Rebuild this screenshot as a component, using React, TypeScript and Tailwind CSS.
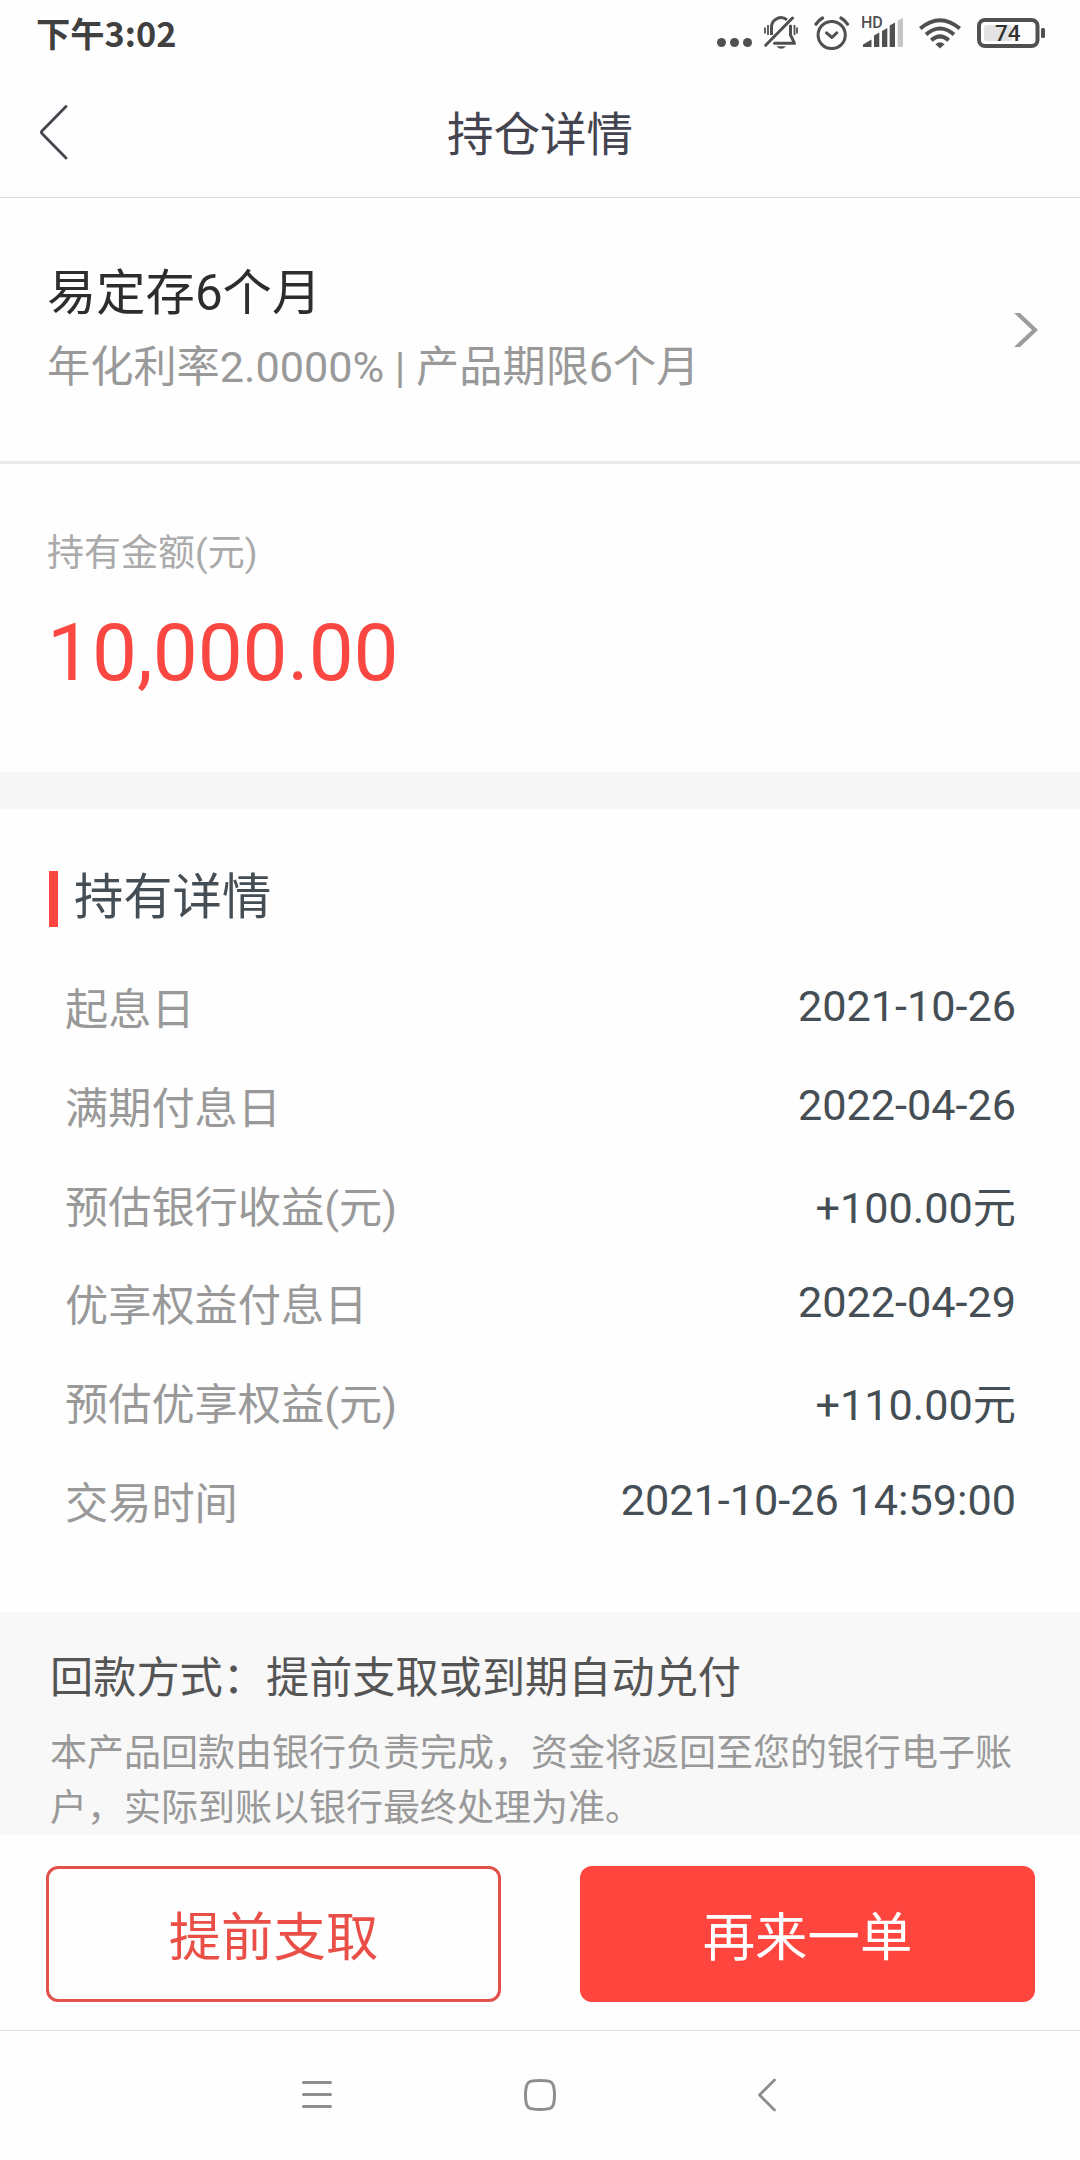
import type { ReactNode } from 'react';

const details = [
  { label: '起息日', value: '2021-10-26' },
  { label: '满期付息日', value: '2022-04-26' },
  { label: '预估银行收益(元)', value: '+100.00元', amount: true },
  { label: '优享权益付息日', value: '2022-04-29' },
  { label: '预估优享权益(元)', value: '+110.00元', amount: true },
  { label: '交易时间', value: '2021-10-26 14:59:00' },
];

function BellOffIcon() {
  return (
    <svg width="34" height="34" viewBox="0 0 34 34" fill="none" stroke="#505050" strokeWidth="3">
      <path d="M7.500 19v-8a9.500 9.500 0 0 1 15.500-7.200" />
      <path d="M26.500 10v9l4 8.300H10.500" strokeLinejoin="round" strokeLinecap="round" />
      <path d="M28.500 2 1.700 29.300" strokeLinecap="round" />
      <path d="M12.500 30.300h9.500q-4.700 5-9.500 0z" fill="#505050" stroke="none" />
      <path d="M4 9v10M1 11.500v6M30.500 9v10M33 11.500v6" strokeWidth="1.8" />
    </svg>
  );
}

function AlarmIcon() {
  return (
    <svg width="36" height="34" viewBox="0 0 36 34" fill="none" stroke="#505050" strokeWidth="3" strokeLinecap="round" strokeLinejoin="round">
      <circle cx="17.700" cy="19" r="13.600" />
      <path d="m12.500 16.800 5.500 4.700 4.800-4.700" />
      <path d="M2 8.200Q4.500 4.200 8.500 2M33.500 8.200Q31 4.200 27 2" strokeWidth="3.2" />
    </svg>
  );
}

function SignalIcon() {
  return (
    <svg width="42" height="66" viewBox="0 0 42 66" fill="#505050">
      <text x="-1" y="28" fontSize="16" fontWeight="500" fontFamily="Roboto, sans-serif">HD</text>
      <path d="M1 47v-2.500l8.500-5V47zM12 47V35.500l5.300-3V47zM20 47V31l5.300-3v19zM27.700 47V25.500l5.300-3V47z" />
      <path d="M35.700 47V20.500l5.300-2.500v29z" fill="#c6c6c6" />
    </svg>
  );
}

function WifiIcon() {
  return (
    <svg width="42" height="32" viewBox="0 0 42 32" fill="none" stroke="#505050" strokeWidth="4">
      <path d="M1.300 11.500Q21-5 40.700 11.500" />
      <path d="M7 17.500Q21 5.500 35 17.500" />
      <path d="M12.300 23.300Q21 15.500 29.700 23.300" />
      <path d="M16.500 27.300q4.500-4 9 0L21 31.500z" fill="#505050" stroke="none" />
    </svg>
  );
}

function BatteryIcon() {
  return (
    <svg width="68" height="30" viewBox="0 0 68 30">
      <rect x="2" y="2" width="58.500" height="26" rx="6" fill="none" stroke="#505050" strokeWidth="4" />
      <rect x="7" y="7" width="28" height="16" rx="2.500" fill="#e3e3e3" />
      <rect x="64" y="10" width="4" height="10" rx="1.500" fill="#505050" />
      <text x="30.700" y="23.300" textAnchor="middle" fontSize="22.500" fontWeight="500" fontFamily="Roboto, sans-serif" fill="#303030">
        74
      </text>
    </svg>
  );
}

function StatusBar() {
  return (
    <div className="flex h-[66px] justify-between pr-[35px] pl-9">
      <span className="font-['Noto_Sans_CJK_SC',sans-serif] text-[34.300px] leading-[65px] font-bold text-[#404040]">
        下午3:02
      </span>
      <div className="flex h-[66px] items-center">
        <div className="mt-[18px] mr-3 flex gap-1">
          <i className="size-[9px] rounded-full bg-[#505050]" />
          <i className="size-[9px] rounded-full bg-[#505050]" />
          <i className="size-[9px] rounded-full bg-[#505050]" />
        </div>
        <BellOffIcon />
        <div className="w-4" />
        <AlarmIcon />
        <div className="w-3" />
        <SignalIcon />
        <div className="w-[15px]" />
        <WifiIcon />
        <div className="w-4" />
        <BatteryIcon />
      </div>
    </div>
  );
}

function Header() {
  return (
    <header className="flex h-[132px] items-center border-b border-[#dcdcdc]">
      <div className="flex w-[120px] pl-[39px]">
        <svg width="30" height="56" viewBox="0 0 30 56" fill="none" stroke="#454550" strokeWidth="2.8" strokeLinecap="round" strokeLinejoin="round">
          <path d="M27 2.500 3.200 26.700q-1.500 1.500 0 3L27 54" />
        </svg>
      </div>
      <h1 className="flex-1 pt-[7px] text-center text-[46.500px] leading-[66px] text-[#444450]">持仓详情</h1>
      <div className="w-[120px]" />
    </header>
  );
}

function DetailRow({ label, value, amount }: { label: string; value: string; amount?: boolean }) {
  return (
    <div className="flex h-[98.700px] items-center justify-between text-[43.200px] leading-[60px]">
      <span className="text-[#999999]">{label}</span>
      <span className={amount ? 'text-[#454e54]' : 'pb-2 text-[#454e54]'}>{value}</span>
    </div>
  );
}

function ActionButton({ children, primary }: { children: ReactNode; primary?: boolean }) {
  return (
    <button
      className={
        primary
          ? 'flex h-[136px] w-[455px] items-center justify-center rounded-xl bg-[#ff463e] pt-[7px] text-[52.400px] leading-[72px] text-white'
          : 'flex h-[136px] w-[455px] items-center justify-center rounded-xl border-3 border-[#e0524b] pt-[7px] text-[52.400px] leading-[72px] text-[#e94f47]'
      }
    >
      {children}
    </button>
  );
}

export default function App() {
  return (
    <div className="flex h-[2160px] w-[1080px] flex-col overflow-hidden bg-[#fefefe] font-[Roboto,'Noto_Sans_CJK_SC',sans-serif]">
      <StatusBar />
      <Header />

      {/* Product */}
      <section className="flex h-[266px] items-center justify-between border-b-3 border-[#e9e9e9] pr-[42px] pl-[47px]">
        <div className="pb-[2px]">
          <h2 className="text-[49.300px] leading-[68px] text-[#2d2d2d]">易定存6个月</h2>
          <p className="mt-[11px] text-[43.200px] leading-[60px] text-[#999999]">年化利率2.0000% | 产品期限6个月</p>
        </div>
        <svg width="24" height="34" viewBox="0 0 24 34" fill="#9c9c9c">
          <path d="M0 0h6l18 17L6 34H0l18-17z" />
        </svg>
      </section>

      {/* Holding amount */}
      <section className="h-[308px] pt-16 pl-[47px]">
        <p className="text-[37px] leading-[52px] text-[#aaaaaa]">持有金额(元)</p>
        <p className="mt-[26px] text-[80px] leading-[94px] text-[#fa4741]">10,000.00</p>
      </section>
      <div className="h-[37px] bg-[#f7f7f7]" />

      {/* Details */}
      <section className="h-[803px] pt-[62px]">
        <div className="flex h-14 items-center pl-[49px]">
          <div className="h-14 w-[9px] bg-[#fb4740]" />
          <h3 className="ml-4 pb-[5px] text-[49.300px] leading-[56px] text-[#454e54]">持有详情</h3>
        </div>
        <div className="mt-[35px] pr-[64px] pl-[65px]">
          {details.map((item) => (
            <DetailRow key={item.label} {...item} />
          ))}
        </div>
      </section>

      <section className="h-[223px] bg-[#f8f8f8] pt-[37px] pl-[50px]">
        <p className="text-[43.200px] leading-[60px] text-[#555555]">回款方式：提前支取或到期自动兑付</p>
        <p className="mt-[17px] w-[970px] text-[37px] leading-[55px] text-[#999999]">
          本产品回款由银行负责完成，资金将返回至您的银行电子账户，实际到账以银行最终处理为准。
        </p>
      </section>

      <div className="flex h-[196px] justify-between border-b border-[#e0e0e0] pt-[31px] pr-[45px] pl-[46px]">
        <ActionButton>提前支取</ActionButton>
        <ActionButton primary>再来一单</ActionButton>
      </div>

      {/* System navigation */}
      <nav className="flex h-[129px] items-center pb-px pl-[302px]">
        <svg width="30" height="32" viewBox="0 0 30 32" stroke="#8e8e8e" strokeWidth="3" strokeLinecap="round">
          <path d="M1.500 3.500h27M1.500 15.500h27M1.500 27.500h27" />
        </svg>
        <svg className="ml-[192px]" width="32" height="32" viewBox="0 0 32 32" fill="none" stroke="#8e8e8e" strokeWidth="3">
          <path d="M16 1.500C27 1.500 30.500 1.500 30.500 16S27 30.500 16 30.500 1.500 30.500 1.500 16 5 1.500 16 1.500z" />
        </svg>
        <svg className="ml-[201px]" width="20" height="34" viewBox="0 0 20 34" fill="none" stroke="#8e8e8e" strokeWidth="2.8" strokeLinecap="round" strokeLinejoin="round">
          <path d="M17.500 2 2.500 17l15 15" />
        </svg>
      </nav>
    </div>
  );
}
